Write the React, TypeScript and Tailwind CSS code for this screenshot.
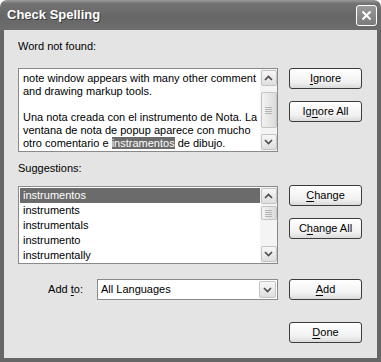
const FONT = "font-['Liberation_Sans',Arial,sans-serif]";

const SUGGESTIONS = ['instrumentos', 'instruments', 'instrumentals', 'instrumento', 'instrumentally'];

function Chevron({ up }: { up?: boolean }) {
  return (
    <svg width="9" height="6" viewBox="0 0 9 6">
      <path
        d={up ? 'M1 5 L4.5 1.5 L8 5' : 'M1 1 L4.5 4.5 L8 1'}
        fill="none"
        stroke="#4a4a4a"
        strokeWidth="1.6"
      />
    </svg>
  );
}

function ArrowBox({ up }: { up?: boolean }) {
  return (
    <div className="h-[16px] w-[16px] rounded-[2px] border border-[#c4c4c4] bg-[linear-gradient(to_bottom,#f7f7f7,#dedede)] flex items-center justify-center">
      <Chevron up={up} />
    </div>
  );
}

function Thumb({ h }: { h: number }) {
  return (
    <div
      className="w-[16px] rounded-[2px] border border-[#c4c4c4] bg-[linear-gradient(to_right,#f2f2f2,#dcdcdc)] flex flex-col items-center justify-center gap-[1px]"
      style={{ height: h }}
    >
      {[0, 1, 2, 3].map((i) => (
        <div key={i} className="h-[1px] w-[7px] bg-[#b5b5b5]" />
      ))}
    </div>
  );
}

function ScrollBar({ thumbTop, thumbH }: { thumbTop: number; thumbH: number }) {
  return (
    <div className="w-[17px] h-full bg-[#f4f4f4] flex flex-col items-center justify-between py-[1px]">
      <div className="flex flex-col items-center">
        <ArrowBox up />
        <div style={{ height: thumbTop }} />
        <Thumb h={thumbH} />
      </div>
      <ArrowBox />
    </div>
  );
}

function Btn({ pre, u, post, className = '' }: { pre: string; u: string; post: string; className?: string }) {
  return (
    <div
      className={`w-[73px] h-[21px] rounded-[3px] border border-[#3c3c3c] bg-[linear-gradient(to_bottom,#ffffff_0%,#f1f1f1_70%,#dadada_100%)] flex items-center justify-center text-[11px] text-black ${className}`}
    >
      <span>
        {pre}
        <span className="underline underline-offset-[2px]">{u}</span>
        {post}
      </span>
    </div>
  );
}

export default function App() {
  return (
    <div className={`w-[381px] h-[362px] flex flex-col bg-white ${FONT}`}>
      <div className="h-[30px] rounded-t-[7px] bg-[linear-gradient(to_bottom,#9a9a9a_0%,#727272_12%,#676767_55%,#6d6d6d_100%)] flex items-center justify-between pl-[7px] pr-[4px]">
        <span className="text-[13px] font-bold text-white [text-shadow:1px_1px_0_#3a3a3a]">Check Spelling</span>
        <div className="h-[21px] w-[21px] rounded-[3px] border border-white bg-[linear-gradient(to_bottom,#9a9a9a,#7a7a7a)] flex items-center justify-center mt-[1px]">
          <svg width="11" height="11" viewBox="0 0 11 11">
            <path d="M1.5 1.5 L9.5 9.5 M9.5 1.5 L1.5 9.5" stroke="white" strokeWidth="2" />
          </svg>
        </div>
      </div>

      <div className="flex-1 border-x-4 border-b-4 border-[#666666] bg-[#e4e4e4] pl-[14px] text-[11px] text-black">
        <div className="h-[14px] leading-[14px] mt-[9px]">Word not found:</div>

        <div className="flex mt-[15px]">
          <div className="w-[260px] h-[84px] border border-[#8a8a8a] bg-white flex">
            <div className="flex-1 overflow-hidden pl-[4px] pt-[3px]">
              <div className="h-[13px] leading-[13px] whitespace-nowrap">note window appears with many other comment</div>
              <div className="h-[13px] leading-[13px] whitespace-nowrap">and drawing markup tools.</div>
              <div className="h-[13px]" />
              <div className="h-[13px] leading-[13px] whitespace-nowrap">Una nota creada con el instrumento de Nota. La</div>
              <div className="h-[13px] leading-[13px] whitespace-nowrap">ventana de nota de popup aparece con mucho</div>
              <div className="h-[13px] leading-[13px] whitespace-nowrap">
                otro comentario e <span className="bg-[#6b6b6b] text-white">instramentos</span> de dibujo.
              </div>
            </div>
            <ScrollBar thumbTop={6} thumbH={36} />
          </div>
          <div className="ml-[11px] flex flex-col gap-[12px]">
            <Btn pre="" u="I" post="gnore" />
            <Btn pre="Ig" u="n" post="ore All" />
          </div>
        </div>

        <div className="h-[14px] leading-[14px] mt-[9px]">Suggestions:</div>

        <div className="flex mt-[11px]">
          <div className="w-[260px] h-[78px] border border-[#8a8a8a] bg-white flex">
            <div className="flex-1 overflow-hidden pl-[1px] pt-[1px]">
              {SUGGESTIONS.map((s, i) => (
                <div
                  key={s}
                  className={`h-[15px] leading-[15px] pl-[3px] whitespace-nowrap ${i === 0 ? 'bg-[#6b6b6b] text-white' : ''}`}
                >
                  {s}
                </div>
              ))}
            </div>
            <ScrollBar thumbTop={2} thumbH={14} />
          </div>
          <div className="ml-[11px] flex flex-col gap-[12px] -mt-[1px]">
            <Btn pre="" u="C" post="hange" />
            <Btn pre="C" u="h" post="ange All" />
          </div>
        </div>

        <div className="flex items-center mt-[15px]">
          <div className="w-[66px] text-right pr-[1px]">
            Add <span className="underline underline-offset-[2px]">t</span>o:
          </div>
          <div className="ml-[13px] w-[181px] h-[21px] border border-[#8a8a8a] bg-white flex items-center">
            <span className="flex-1 pl-[3px]">All Languages</span>
            <div className="h-[17px] w-[17px] mr-[1px] rounded-[2px] border border-[#c4c4c4] bg-[linear-gradient(to_bottom,#f7f7f7,#dedede)] flex items-center justify-center">
              <Chevron />
            </div>
          </div>
          <Btn pre="" u="A" post="dd" className="ml-[11px]" />
        </div>

        <div className="flex justify-end pr-[15px] mt-[22px]">
          <Btn pre="" u="D" post="one" />
        </div>
      </div>
    </div>
  );
}
